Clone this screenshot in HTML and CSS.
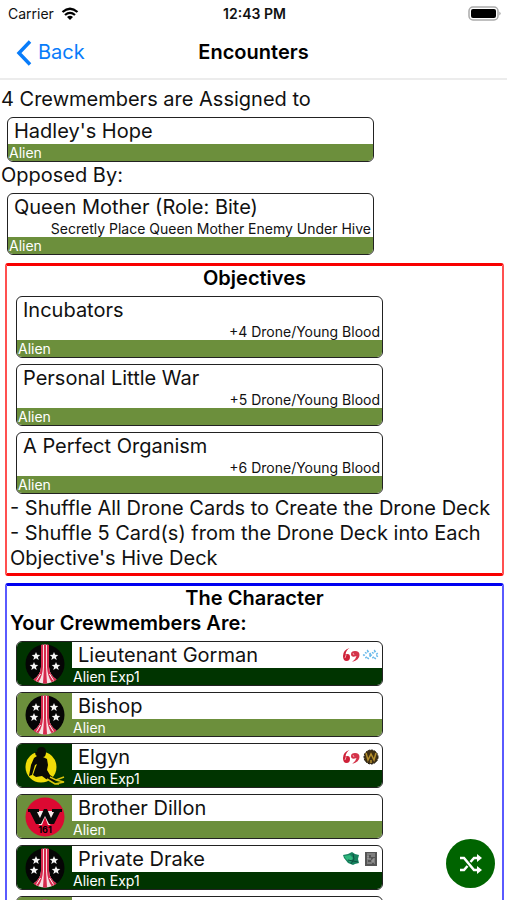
FILE: index.html
```html
<!DOCTYPE html>
<html lang="en">
<head>
  <meta charset="utf-8">
  <meta name="viewport" content="width=device-width, initial-scale=1">
  <title>Encounters</title>
  <link rel="stylesheet" href="styles.css">
</head>
<body>
  <svg class="sprite" width="0" height="0" aria-hidden="true">
    <!-- striped marine badge -->
    <symbol id="badge-marine" viewBox="0 0 40 40">
      <circle cx="20" cy="20" r="19.5" fill="#050505"/>
      <path d="M16 .9q4-.8 8 0V23q.5 8 7.500 12.500-5 4-11.500 4T8.500 35.500Q15.500 31 16 23z" fill="#f7dfe3"/>
      <path d="M16 .9l2-.3V23q-.5 9-4.500 15-3-.5-5-2.500Q15.500 31 16 23zM19 .5h2V23l1 16.300q-2 .4-4 0L19 23zM22 .6l2 .3V23q.5 8 7.500 12.500-2 2-5 2.500-4-6-4.500-15z" fill="#d6294c"/>
      <path d="M15.500 30l-4 6.500M24.500 30l4 6.500" fill="none" stroke="#fff" stroke-width="1"/>
      <g fill="#f4f4f4">
        <path id="star" d="M11 8l1.200 2.800 3.100.2-2.400 2 .8 3-2.700-1.700L8.300 16l.8-3-2.400-2 3.100-.2z"/>
        <use href="#star" x="18"/>
        <use href="#star" x="-2" y="10"/>
        <use href="#star" x="20" y="10"/>
      </g>
    </symbol>
    <!-- sitting figure on a yellow disc -->
    <symbol id="badge-figure" viewBox="0 0 40 40">
      <circle cx="16" cy="21" r="15.500" fill="#f0dc08"/>
      <path d="M12 6q0-5 4.500-5T21 6t-3 5l4 2 1 6-1 5 3 5 6 4-2 3-8-3-4-3-6 1-3-2 2-6 2-5-2 1-3 10-3 1 2-11 3-7 3-2q-2-1-2-4z" fill="#0a0a05"/>
      <path d="M22 33l8 5 4 0M25 31l6 3 8-3M30 38l9-2-8-2" fill="none" stroke="#d8c50c" stroke-width="1.500"/>
    </symbol>
    <symbol id="mark-claw" viewBox="0 0 18 16">
      <path d="M7.500 1Q4 3 3.500 7.500 8 6 8 10q0 4-3.500 4Q1 14 1 9q0-6 6.500-8z" fill="#cf2138"/>
      <path d="M9 7q0-3 4-3 4.500 0 4.500 4 0 5-7.500 7 4-3 4.500-6Q9 11 9 7z" fill="#d4344a"/>
      <path d="M4 8l-1 3M11 6l1 2" stroke="#f2a2ad" stroke-width="1"/>
    </symbol>
    <symbol id="mark-diamonds" viewBox="0 0 16 16">
      <path d="M4.500 4l3.500 4-3.500 4L1 8zM11.500 4L15 8l-3.500 4L8 8z" fill="none" stroke="#69b9ea" stroke-width="2" stroke-dasharray="1.500 1.500"/>
    </symbol>
    <symbol id="mark-company" viewBox="0 0 16 16">
      <circle cx="8" cy="8" r="7" fill="#403014" stroke="#171207" stroke-dasharray="2 1"/>
      <path d="M3 4l2 7 3-6 3 6 2-7M8 11v3" fill="none" stroke="#b5902f" stroke-width="1.500"/>
    </symbol>
    <symbol id="mark-gem" viewBox="0 0 18 16">
      <path d="M1 4l5-1 4-2 3 2 4 1-1 4 1 4-4 1-2 1-5-2-4-5z" fill="#17835f"/>
      <path d="M2 5l6-1 3 3-3 4-4-3z" fill="#30b77d"/>
      <path d="M11 3l1 5-3 5M6 9l10 2" fill="none" stroke="#0d5141" stroke-width="1"/>
    </symbol>
    <symbol id="mark-code" viewBox="0 0 16 16">
      <rect x="2" y="1" width="12" height="14" fill="#555"/>
      <path d="M4 3h8M4 5h2m2 0h4M4 8h4m2 0h2M4 10h1m3 0h4M4 12h5m2 0h1M5 5v3m5 0v4" stroke="#aaa" stroke-width="1"/>
    </symbol>
  </svg>

  <div class="app">
    <div class="status-bar">
      <div class="carrier">
        <span>Carrier</span>
        <svg width="18" height="14" viewBox="0 0 18 14" aria-hidden="true">
          <path d="M1.500 5Q9-1.500 16.500 5M4 8q5-4.300 10 0" fill="none" stroke="#000" stroke-width="2.300"/>
          <path d="M6 10q3-2.500 6 0l-3 3z"/>
        </svg>
      </div>
      <div class="clock">12:43 PM</div>
      <div class="battery">
        <svg width="33" height="15" viewBox="0 0 33 15" aria-hidden="true">
          <rect x="1" y="1" width="29" height="13" rx="4" fill="#fff" stroke="#aaa" stroke-width="1.500"/>
          <rect x="3" y="3" width="25" height="9" rx="2"/>
          <path d="M31.500 5.500q2 2 0 4z" fill="#888"/>
        </svg>
      </div>
    </div>

    <header class="nav-bar">
      <a class="back" href="#">
        <svg width="16" height="26" viewBox="0 0 16 26" aria-hidden="true">
          <path d="M14 1.500L3 13l11 11.500" fill="none" stroke="currentColor" stroke-width="3.500"/>
        </svg>
        <span>Back</span>
      </a>
      <h1>Encounters</h1>
    </header>

    <main>
      <section class="location">
        <p>4 Crewmembers are Assigned to</p>
        <div class="card">
          <div class="card-body">
            <div class="card-title">Hadley's Hope</div>
            <div class="card-set">Alien</div>
          </div>
        </div>
        <p>Opposed By:</p>
        <div class="card">
          <div class="card-body">
            <div class="card-title">Queen Mother (Role: Bite)</div>
            <div class="card-note">Secretly Place Queen Mother Enemy Under Hive</div>
            <div class="card-set">Alien</div>
          </div>
        </div>
      </section>

      <section class="panel objectives">
        <h2>Objectives</h2>
        <div class="cards">
          <div class="card">
            <div class="card-body">
              <div class="card-title">Incubators</div>
              <div class="card-note">+4 Drone/Young Blood</div>
              <div class="card-set">Alien</div>
            </div>
          </div>
          <div class="card">
            <div class="card-body">
              <div class="card-title">Personal Little War</div>
              <div class="card-note">+5 Drone/Young Blood</div>
              <div class="card-set">Alien</div>
            </div>
          </div>
          <div class="card">
            <div class="card-body">
              <div class="card-title">A Perfect Organism</div>
              <div class="card-note">+6 Drone/Young Blood</div>
              <div class="card-set">Alien</div>
            </div>
          </div>
        </div>
        <p>- Shuffle All Drone Cards to Create the Drone Deck</p>
        <p>- Shuffle 5 Card(s) from the Drone Deck into Each Objective's Hive Deck</p>
      </section>

      <section class="panel characters">
        <h2>The Character</h2>
        <h3>Your Crewmembers Are:</h3>
        <div class="cards">
          <div class="card exp">
            <div class="badge"><svg><use href="#badge-marine"/></svg></div>
            <div class="card-body">
              <div class="card-title">Lieutenant Gorman</div>
              <div class="card-set">Alien Exp1</div>
              <div class="marks"><svg><use href="#mark-claw"/></svg><svg><use href="#mark-diamonds"/></svg></div>
            </div>
          </div>
          <div class="card">
            <div class="badge"><svg><use href="#badge-marine"/></svg></div>
            <div class="card-body">
              <div class="card-title">Bishop</div>
              <div class="card-set">Alien</div>
            </div>
          </div>
          <div class="card exp">
            <div class="badge"><svg><use href="#badge-figure"/></svg></div>
            <div class="card-body">
              <div class="card-title">Elgyn</div>
              <div class="card-set">Alien Exp1</div>
              <div class="marks"><svg><use href="#mark-claw"/></svg><svg><use href="#mark-company"/></svg></div>
            </div>
          </div>
          <div class="card">
            <div class="badge">
              <svg viewBox="0 0 40 40">
                <circle cx="20" cy="20" r="19.5" fill="#dc0932"/>
                <path d="M9 14h22l-6 14h-2l-3-8-3 8h-3z" fill="#f5e9e9"/>
                <path d="M3 12h11v3h-2l3 6 4-9h3l4 9 3-6h-2v-3h10v3h-2l-6 12h-5l-4-8-4 8h-5L5 15H3z" fill="#080808"/>
                <text x="20" y="36" text-anchor="middle" class="badge-number">161</text>
              </svg>
            </div>
            <div class="card-body">
              <div class="card-title">Brother Dillon</div>
              <div class="card-set">Alien</div>
            </div>
          </div>
          <div class="card exp">
            <div class="badge"><svg><use href="#badge-marine"/></svg></div>
            <div class="card-body">
              <div class="card-title">Private Drake</div>
              <div class="card-set">Alien Exp1</div>
              <div class="marks"><svg><use href="#mark-gem"/></svg><svg><use href="#mark-code"/></svg></div>
            </div>
          </div>
          <div class="card">
            <div class="badge"><svg><use href="#badge-marine"/></svg></div>
            <div class="card-body">
              <div class="card-title"></div>
              <div class="card-set"></div>
            </div>
          </div>
        </div>
      </section>
    </main>

    <button class="shuffle" type="button" aria-label="Shuffle">
      <svg width="24" height="20" viewBox="0 0 24 20" aria-hidden="true">
        <path d="M1 4h4l10 12h4M1 16h4l3.500-4M11.500 8L15 4h4" fill="none" stroke="#fff" stroke-width="2.500"/>
        <path d="M18 0l5 4-5 4zM18 12l5 4-5 4z" fill="#fff"/>
      </svg>
    </button>
  </div>
</body>
</html>
```

FILE: styles.css
```css
* {
  box-sizing: border-box;
}
body {
  margin: 0;
  font-family: Inter, "Liberation Sans", sans-serif;
  font-size: 20px;
  line-height: 25px;
  color: #111;
  background-color: #fff;
}
h1, h2, h3, p {
  margin: 0;
  font-size: 20px;
}
h1, h2, h3 {
  font-weight: 600;
  color: #000;
}
h2 {
  text-align: center;
}
.sprite {
  display: block;
}
.app {
  display: flex;
  flex-direction: column;
  height: 100vh;
}

/* top bars */
.status-bar {
  display: grid;
  grid-template-columns: 1fr auto 1fr;
  align-items: center;
  height: 27px;
  padding: 0 6px 0 8px;
  font-size: 14px;
}
.carrier {
  display: flex;
  align-items: center;
  gap: 7px;
}
.clock {
  font-weight: 600;
}
.battery {
  display: flex;
  justify-content: flex-end;
}
.nav-bar {
  display: grid;
  grid-template-columns: 1fr auto 1fr;
  align-items: center;
  height: 53px;
  padding: 0 16px;
  border-bottom: 2px solid #ececec;
}
.back {
  display: flex;
  align-items: center;
  gap: 6px;
  color: #087cfa;
  text-decoration: none;
}

main {
  flex: 1;
  min-height: 0;
  overflow-y: auto;
  scrollbar-width: none;
  padding: 7px 3px 0 1px;
}

/* cards */
.card {
  display: flex;
  width: 100%;
  max-width: 367px;
  border: 1px solid #222;
  border-radius: 6px;
  overflow: hidden;
  background-color: #fff;
}
.card-body {
  flex: 1;
  position: relative;
}
.card-title {
  height: 26px;
  padding-left: 6px;
  line-height: 26px;
}
.card-note {
  padding-right: 2px;
  font-size: 14px;
  line-height: 17px;
  text-align: right;
}
.card-set {
  height: 17px;
  padding-left: 1px;
  font-size: 14px;
  line-height: 17px;
  color: #fff;
  background-color: #6c8f3c;
}
.badge {
  display: flex;
  align-items: center;
  justify-content: center;
  width: 55px;
  background-color: #6c8f3c;
}
.badge svg {
  width: 40px;
  height: 40px;
}
.badge-number {
  font-size: 9px;
  font-weight: 700;
}
.exp .badge,
.exp .card-set {
  background-color: #003400;
}
.marks {
  position: absolute;
  top: 5px;
  right: 2px;
  display: flex;
  gap: 2px;
}
.marks svg {
  width: 18px;
  height: 16px;
}

.location .card {
  margin: 5px 6px 1px;
}
.location .card:last-child {
  margin-bottom: 8px;
}
.panel {
  margin: 0 0 7px 4px;
  padding: 0 3px 2px;
  border-style: solid;
  border-width: 3px 2px;
  border-radius: 3px;
}
.objectives {
  border-color: #f80000 #ff5050;
}
.characters {
  border-color: #0000f0 #5a5aff;
}
.cards {
  display: flex;
  flex-direction: column;
  gap: 6px;
  padding: 5px 6px 2px;
}

.shuffle {
  position: fixed;
  right: 12px;
  bottom: 12px;
  display: flex;
  align-items: center;
  justify-content: center;
  width: 49px;
  height: 49px;
  padding: 0;
  border: none;
  border-radius: 50%;
  background-color: #006400;
  cursor: pointer;
}
```
